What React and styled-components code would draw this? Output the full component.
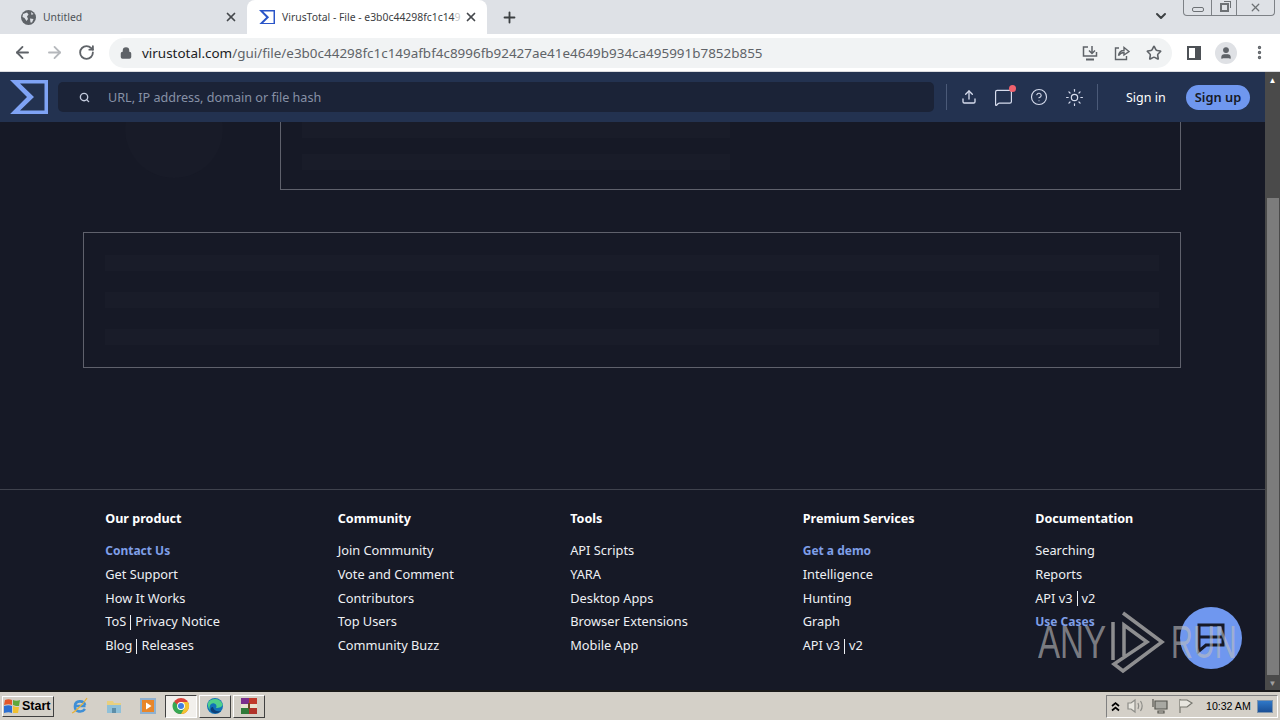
import React from 'react';
import styled, { createGlobalStyle } from 'styled-components';
import {
  ArrowLeft, ArrowRight, RotateCw, Lock, Star, X, Plus, ChevronDown, Search,
  Upload, MessageSquare, CircleHelp, Sun, EllipsisVertical, User,
} from 'lucide-react';

const GlobalStyle = createGlobalStyle`
  html, body { margin: 0; height: 100%; overflow: hidden; }
  body { font-family: "Noto Sans", sans-serif; background: #161926; }
  * { box-sizing: border-box; }
`;

const footerColumns = [
  { title: 'Our product', links: [['Contact Us', true], ['Get Support'], ['How It Works'], ['ToS | Privacy Notice'], ['Blog | Releases']] },
  { title: 'Community', links: [['Join Community'], ['Vote and Comment'], ['Contributors'], ['Top Users'], ['Community Buzz']] },
  { title: 'Tools', links: [['API Scripts'], ['YARA'], ['Desktop Apps'], ['Browser Extensions'], ['Mobile App']] },
  { title: 'Premium Services', links: [['Get a demo', true], ['Intelligence'], ['Hunting'], ['Graph'], ['API v3 | v2']] },
  { title: 'Documentation', links: [['Searching'], ['Reports'], ['API v3 | v2'], ['Use Cases', true]] },
];

const Sigma = ({ size, color }) => (
  <svg width={size} height={size * 0.9} viewBox="0 0 38 34">
    <path fill={color} fillRule="evenodd" d="M0 0H38V34H0L17 17ZM10 3.500L24 17L10 30.500H34.500V3.500Z" />
  </svg>
);

// "ToS | Privacy Notice": the bar sits tight between the words
const LinkLabel = ({ text }) => {
  const [left, right] = text.split(' | ');
  if (!right) return text;
  return <>{left}<Pipe />{right}</>;
};

export default function App() {
  return (
    <Screen>
      <GlobalStyle />
      <TabStrip>
        <Tab>
          <svg width="15" height="15" viewBox="0 0 15 15">
            <circle cx="7.500" cy="7.500" r="7.500" fill="#5f6368" />
            <path fill="#dee1e6" d="M2 4L6 2.500L7.500 4.500L6 6.500L7 9L5.500 11L3.500 8L1.500 7ZM9 8.500L12.500 9L11 12.500L9.500 12.500ZM10 2L12.500 4L10.500 5Z" />
          </svg>
          <TabTitle>Untitled</TabTitle>
          <X size={14} strokeWidth={3} color="#45484c" />
        </Tab>
        <Tab $active>
          <Sigma size={16} color="#2a55c8" />
          <TabTitle $active>VirusTotal - File - e3b0c44298fc1c14<Faded>9</Faded></TabTitle>
          <X size={14} strokeWidth={3} color="#45484c" />
        </Tab>
        <NewTab><Plus size={17} strokeWidth={2.6} color="#3c4043" /></NewTab>
        <TabSpacer />
        <ChevronDown size={16} strokeWidth={3} color="#3c4043" />
        <WindowButtons>
          <WinButton $w={28}><MinGlyph /></WinButton>
          <WinButton $w={25}><RestoreGlyph /></WinButton>
          <WinButton $w={37} $last><X size={13} color="#6d7175" strokeWidth={2.4} /></WinButton>
        </WindowButtons>
      </TabStrip>

      <Toolbar>
        <NavIcon><ArrowLeft size={19} strokeWidth={2.3} color="#5f6368" /></NavIcon>
        <NavIcon><ArrowRight size={19} strokeWidth={2.3} color="#b5b8bc" /></NavIcon>
        <NavIcon><RotateCw size={17} strokeWidth={2.6} color="#5f6368" /></NavIcon>
        <Omnibox>
          <Lock size={12} strokeWidth={3} color="#5f6368" fill="#5f6368" />
          <Url><b>virustotal.com</b>/gui/file/e3b0c44298fc1c149afbf4c8996fb92427ae41e4649b934ca495991b7852b855</Url>
          <OmniActions>
            <svg width="16" height="16" viewBox="0 0 16 16" fill="none" stroke="#5f6368" strokeWidth="1.500">
              <path d="M6 2H1.500V11H14.500V7" />
              <path d="M10 1V8M7 5.500L10 8.500L13 5.500" />
              <path d="M4 14.500H12" strokeWidth="2" />
            </svg>
            <svg width="16" height="16" viewBox="0 0 16 16" fill="none" stroke="#5f6368" strokeWidth="1.400">
              <path d="M5 3H1.500V14.500H12.500V11" />
              <path d="M4.500 10.500C5 7 7.500 5.500 10 5.500V2.500L15 6.500L10 10V7.500C8 7.500 6 8.500 4.500 10.500Z" />
            </svg>
            <Star size={16} strokeWidth={2.4} color="#5f6368" />
          </OmniActions>
        </Omnibox>
        <SidePanelIcon />
        <Avatar><User size={14} color="#5f6368" fill="#5f6368" /></Avatar>
        <EllipsisVertical size={17} strokeWidth={2.8} color="#5f6368" />
      </Toolbar>

      <Viewport>
        <Page>
          <Header>
            <Sigma size={38} color="#7fa3f5" />
            <SearchBox>
              <Search size={11} strokeWidth={3} color="#c3cbdd" />
              <span>URL, IP address, domain or file hash</span>
            </SearchBox>
            <Divider />
            <HeaderIcons>
              <Upload size={16} color="#d6dced" />
              <Badge>
                <MessageSquare size={19} strokeWidth={1.5} color="#d6dced" />
                <Dot />
              </Badge>
              <CircleHelp size={18} strokeWidth={1.5} color="#d6dced" />
              <Sun size={19} strokeWidth={1.5} color="#d6dced" />
            </HeaderIcons>
            <Divider $flush />
            <SignIn>Sign in</SignIn>
            <SignUp>Sign up</SignUp>
          </Header>

          <Content>
            <TopRow>
              <AvatarSkeleton />
              <TopCard>
                <SkeletonLine $w={428} />
                <SkeletonLine $w={428} />
              </TopCard>
            </TopRow>
            <WideCard>
              <SkeletonLine />
              <SkeletonLine />
              <SkeletonLine />
            </WideCard>
            <Footer>
              {footerColumns.map((col) => (
                <FooterColumn key={col.title}>
                  <FooterTitle>{col.title}</FooterTitle>
                  {col.links.map(([label, accent]) => (
                    <FooterLink key={label} $accent={accent}><LinkLabel text={label} /></FooterLink>
                  ))}
                </FooterColumn>
              ))}
            </Footer>
            <Fab>
              <svg width="34" height="34" viewBox="0 0 34 34" fill="none" stroke="#161926" strokeWidth="3">
                <path d="M5 4H29V24H12L5 30Z" />
                <path d="M5 16H29" />
              </svg>
            </Fab>
            <Watermark>
              <WatermarkText $scale={0.72}>ANY</WatermarkText>
              <svg width="58" height="64" viewBox="0 0 58 64" fill="none" stroke="#8e8e90" strokeWidth="3.500">
                <path d="M6 12V50" />
                <path d="M16 3L55 32L16 61L7 54L40 32L17 15V46" />
              </svg>
              <WatermarkText $scale={0.66}>RUN</WatermarkText>
            </Watermark>
          </Content>
        </Page>
        <Scrollbar>
          <ScrollArrow>▲</ScrollArrow>
          <ScrollTrack><ScrollThumb /></ScrollTrack>
          <ScrollArrow $down>▼</ScrollArrow>
        </Scrollbar>
      </Viewport>

      <Taskbar>
        <StartButton>
          <svg width="17" height="16" viewBox="0 0 17 16">
            <path fill="#e2572b" d="M1 2C3 1 6 1 8 2V7C6 6 3 6 0 7Z" />
            <path fill="#5ea83a" d="M9 2C11 3 14 3 16 2L15 8C13 8 11 8 9 7Z" />
            <path fill="#2c6fd1" d="M0 8C3 7 6 7 8 8V15C6 14 3 14 0 15Z" />
            <path fill="#f0c030" d="M9 8C11 9 13 9 15 9L14 15C12 15 11 15 9 15Z" />
          </svg>
          Start
        </StartButton>
        <QuickIcons>
          <QuickIcon>
            <svg width="18" height="18" viewBox="0 0 18 18" fill="none">
              <path d="M14.500 9H4C4 3 13 3 14 8M4 10C4 15 11 16 14 12" stroke="#3f8fd6" strokeWidth="2.600" />
              <path d="M1 16C4 15 13 6 16 1" stroke="#e8b23a" strokeWidth="1.200" />
            </svg>
          </QuickIcon>
          <QuickIcon>
            <svg width="18" height="18" viewBox="0 0 18 18">
              <path fill="#e8cf7e" d="M2 4H8L9 6H16V9H2Z" />
              <path fill="#8fc0d8" d="M2 8H16V16H2Z" />
              <path fill="#5d8ea8" d="M7 11H11V16H7Z" />
            </svg>
          </QuickIcon>
          <QuickIcon>
            <svg width="18" height="18" viewBox="0 0 18 18">
              <rect x="1" y="1" width="16" height="16" fill="#8fb0cf" />
              <rect x="3" y="3" width="12" height="12" fill="#e8862a" />
              <path fill="#fff" d="M7 5.500L12.500 9L7 12.500Z" />
            </svg>
          </QuickIcon>
        </QuickIcons>
        <TaskButton $active>
          <svg width="18" height="18" viewBox="0 0 18 18">
            <circle cx="9" cy="9" r="8" fill="#d9433a" />
            <path fill="#f4c430" d="M9 17A8 8 0 0 0 16 5H9Z" />
            <path fill="#37a853" d="M2 4.500A8 8 0 0 0 9 17L12.500 11H9Z" />
            <circle cx="9" cy="9" r="3.900" fill="#fff" />
            <circle cx="9" cy="9" r="3" fill="#3f7fe0" />
          </svg>
        </TaskButton>
        <TaskButton>
          <svg width="18" height="18" viewBox="0 0 18 18">
            <circle cx="9" cy="9" r="8" fill="#1273b8" />
            <path fill="#4fd08a" d="M2 6C4 1 14 0 16.500 7C17 10 13 11 10 11C12 8 8 5 5 7C4 8 3 10 4 13C2 11 1.500 8 2 6Z" />
            <path fill="#0d3f78" d="M5 14C7 17 12 17 15 14C11 15 8 14 7 10C5 10 4 12 5 14Z" />
          </svg>
        </TaskButton>
        <TaskButton>
          <svg width="18" height="18" viewBox="0 0 18 18">
            <rect x="1" y="1" width="8" height="6" fill="#7a2f8c" />
            <rect x="9" y="1" width="8" height="6" fill="#c0392b" />
            <rect x="1" y="7" width="16" height="4" fill="#e8e2d0" />
            <rect x="1" y="11" width="8" height="6" fill="#2f7a3a" />
            <rect x="9" y="11" width="8" height="6" fill="#b0332a" />
            <rect x="8" y="6" width="2" height="6" fill="#6b4a22" />
          </svg>
        </TaskButton>
        <TaskSpacer />
        <Tray>
          <svg width="11" height="11" viewBox="0 0 11 11" fill="none" stroke="#000" strokeWidth="1.700">
            <path d="M2 5L5.500 2L9 5M2 9.500L5.500 6.500L9 9.500" />
          </svg>
          <svg width="18" height="16" viewBox="0 0 18 16" fill="none" stroke="#8d8d88" strokeWidth="1.200">
            <path d="M1 5H4L8 2V14L4 11H1Z" fill="#e8e6df" />
            <path d="M11 5C12 7 12 9 11 11M13.500 3C15.500 6 15.500 10 13.500 13" />
          </svg>
          <svg width="18" height="16" viewBox="0 0 18 16" fill="none" stroke="#55554f" strokeWidth="1.200">
            <path d="M4 3H16V11H4Z" fill="#a8a8a2" />
            <path d="M2 1V9M7 13H13V15H7Z" />
          </svg>
          <TrayFlag>
            <svg width="16" height="16" viewBox="0 0 16 16" fill="none" stroke="#77776f" strokeWidth="1.200">
              <path d="M2 1V15" />
              <path d="M2 2H9L14 5L9 9H2" fill="#e8e6df" />
            </svg>
          </TrayFlag>
          <Clock>10:32 AM</Clock>
          <DesktopPeek />
        </Tray>
      </Taskbar>
    </Screen>
  );
}

const Screen = styled.div`
  width: 1280px;
  height: 720px;
  display: flex;
  flex-direction: column;
  overflow: hidden;
`;

const TabStrip = styled.div`
  height: 34px;
  background: #dee1e6;
  display: flex;
  align-items: flex-end;
  padding-left: 8px;
  flex-shrink: 0;
  position: relative;
  & > svg { margin: 0 111px 10px 0; }
`;

const Tab = styled.div`
  width: ${(p) => (p.$active ? '240px' : '239px')};
  height: 34px;
  padding: 0 9px 0 ${(p) => (p.$active ? '12px' : '13px')};
  display: flex;
  align-items: center;
  gap: 7px;
  background: ${(p) => (p.$active ? '#fff' : 'transparent')};
  border-radius: 8px 8px 0 0;
  svg { flex-shrink: 0; }
`;

const TabTitle = styled.span`
  flex: 1;
  min-width: 0;
  font-size: 10.4px;
  white-space: nowrap;
  color: ${(p) => (p.$active ? '#3c4043' : '#4d5156')};
`;

const Faded = styled.span`
  opacity: 0.3;
`;

const NewTab = styled.div`
  width: 30px;
  height: 34px;
  display: flex;
  align-items: center;
  justify-content: center;
  margin-left: 7px;
`;

const TabSpacer = styled.div`
  flex: 1;
`;

const WindowButtons = styled.div`
  position: absolute;
  top: 0;
  right: 5px;
  height: 16px;
  display: flex;
  border: 1px solid #7d8186;
  border-top: none;
  border-radius: 0 0 4px 4px;
`;

const WinButton = styled.div`
  width: ${(p) => p.$w}px;
  display: flex;
  align-items: center;
  justify-content: center;
  border-right: ${(p) => (p.$last ? 'none' : '1px solid #7d8186')};
`;

const MinGlyph = styled.div`
  width: 12px;
  height: 5px;
  margin-top: 4px;
  border: 1px solid #6d7175;
  border-radius: 2px;
`;

const RestoreGlyph = styled.div`
  width: 9px;
  height: 9px;
  border: 2px solid #6d7175;
  box-shadow: 2px -2px 0 -1px #dee1e6, 3px -3px 0 -1px #6d7175;
`;

const Toolbar = styled.div`
  height: 38px;
  background: #fff;
  border-bottom: 1px solid #dadce0;
  display: flex;
  align-items: center;
  padding: 0 12px 0 6px;
  flex-shrink: 0;
`;

const NavIcon = styled.div`
  width: 32px;
  display: flex;
  justify-content: center;
`;

const Omnibox = styled.div`
  width: 1063px;
  height: 30px;
  margin-left: 7px;
  border-radius: 15px;
  background: #f1f3f4;
  display: flex;
  align-items: center;
  padding: 0 10px 0 11px;
`;

const Url = styled.div`
  flex: 1;
  margin-left: 10px;
  font-size: 13.44px;
  color: #5f6368;
  white-space: nowrap;
  b { font-weight: 400; color: #202124; }
`;

const OmniActions = styled.div`
  display: flex;
  gap: 16px;
  align-items: center;
`;

const SidePanelIcon = styled.div`
  width: 14px;
  height: 14px;
  margin-left: 15px;
  border: 2px solid #4d5156;
  border-right-width: 6px;
`;

const Avatar = styled.div`
  width: 22px;
  height: 22px;
  margin: 0 14px;
  border-radius: 50%;
  background: #dfe1e5;
  display: flex;
  align-items: center;
  justify-content: center;
`;

const Viewport = styled.div`
  flex: 1;
  display: flex;
  min-height: 0;
`;

const Page = styled.div`
  width: 1265px;
  display: flex;
  flex-direction: column;
  background: #161926;
`;

const Header = styled.header`
  height: 50px;
  background: #233250;
  display: flex;
  align-items: center;
  padding: 0 15px 0 10px;
  flex-shrink: 0;
  position: relative;
  z-index: 1;
`;

const SearchBox = styled.div`
  width: 876px;
  height: 30px;
  margin-left: 10px;
  flex-shrink: 0;
  border-radius: 5px;
  background: #1b2337;
  display: flex;
  align-items: center;
  gap: 18px;
  padding-left: 21px;
  color: #8791a6;
  font-size: 12.6px;
`;

const Divider = styled.div`
  width: 1px;
  height: 26px;
  flex-shrink: 0;
  background: #4b5a78;
  margin-left: ${(p) => (p.$flush ? '0' : '12px')};
`;

const HeaderIcons = styled.div`
  width: 150px;
  flex-shrink: 0;
  padding: 0 13px 0 14px;
  display: flex;
  align-items: center;
  justify-content: space-between;
`;

const Badge = styled.div`
  position: relative;
  display: flex;
`;

const Dot = styled.span`
  position: absolute;
  top: -3px;
  right: -3px;
  width: 7px;
  height: 7px;
  border-radius: 50%;
  background: #f0616d;
`;

const SignIn = styled.div`
  margin-left: 28px;
  width: 39px;
  color: #fff;
  font-size: 12.5px;
  white-space: nowrap;
`;

const SignUp = styled.div`
  margin-left: 21px;
  width: 64px;
  height: 25px;
  flex-shrink: 0;
  border-radius: 13px;
  background: #6f97ef;
  color: #161926;
  font-size: 12.8px;
  font-weight: 600;
  white-space: nowrap;
  display: flex;
  align-items: center;
  justify-content: center;
`;

const Content = styled.main`
  flex: 1;
  min-height: 0;
  position: relative;
  overflow: hidden;
`;

const TopRow = styled.div`
  margin: -60px 84px 0 83px;
  height: 128px;
  display: flex;
  align-items: flex-start;
  justify-content: space-between;
`;

const AvatarSkeleton = styled.div`
  width: 98px;
  height: 98px;
  margin: 18px 0 0 42px;
  border-radius: 50%;
  background: #181b28;
`;

const TopCard = styled.div`
  width: 901px;
  height: 128px;
  border: 1px solid #5f616c;
  padding: 59px 0 0 21px;
  display: flex;
  flex-direction: column;
  gap: 16px;
`;

const SkeletonLine = styled.div`
  height: 16px;
  flex-shrink: 0;
  width: ${(p) => (p.$w ? `${p.$w}px` : '100%')};
  background: #191c29;
`;

const WideCard = styled.section`
  margin: 42px 84px 0 83px;
  height: 136px;
  border: 1px solid #5f616c;
  padding: 22px 21px;
  display: flex;
  flex-direction: column;
  gap: 21px;
`;

const Footer = styled.footer`
  margin-top: 121px;
  border-top: 1px solid #3f424d;
  padding: 20px 0 0 105.2px;
  display: grid;
  grid-template-columns: repeat(5, 232.5px);
`;

const FooterColumn = styled.div`
  display: flex;
  flex-direction: column;
`;

const FooterTitle = styled.div`
  font-size: 12.6px;
  font-weight: 700;
  line-height: 18px;
  color: #fff;
  margin-bottom: 11px;
`;

const FooterLink = styled.div`
  font-size: ${(p) => (p.$accent ? '12px' : '12.8px')};
  line-height: 23.8px;
  white-space: nowrap;
  display: flex;
  align-items: center;
  font-weight: ${(p) => (p.$accent ? 700 : 400)};
  color: ${(p) => (p.$accent ? '#7f9fe8' : '#eef0f4')};
`;

const Pipe = styled.span`
  width: 1px;
  height: 15px;
  margin: 0 4px;
  background: #eef0f4;
`;

const Fab = styled.div`
  position: absolute;
  left: 1180px;
  top: 485px;
  width: 62px;
  height: 62px;
  border-radius: 50%;
  background: #6f97ef;
  display: flex;
  align-items: center;
  justify-content: center;
`;

const Watermark = styled.div`
  position: absolute;
  left: 1038px;
  top: 488px;
  display: flex;
  align-items: center;
  gap: 6px;
  pointer-events: none;
`;

const WatermarkText = styled.span`
  font-family: "Liberation Sans", sans-serif;
  font-size: 46px;
  font-weight: 400;
  color: rgba(190, 190, 190, 0.62);
  display: inline-block;
  width: 63px;
  transform: scaleX(${(p) => p.$scale});
  transform-origin: left center;
`;

const Scrollbar = styled.div`
  width: 15px;
  background: #4a4a4a;
  display: flex;
  flex-direction: column;
`;

const ScrollArrow = styled.div`
  height: 16px;
  font-size: 8px;
  line-height: 16px;
  text-align: center;
  color: ${(p) => (p.$down ? '#a0a0a0' : '#fff')};
`;

const ScrollTrack = styled.div`
  flex: 1;
  padding: 110px 1px 0 2px;
  display: flex;
`;

const ScrollThumb = styled.div`
  flex: 1;
  height: 477px;
  background: #7c7c7c;
`;

const Taskbar = styled.div`
  height: 30px;
  background: #d4d0c8;
  border-top: 2px solid #1a1a1a;
  display: flex;
  align-items: center;
  padding: 0 2px;
  flex-shrink: 0;
`;

const StartButton = styled.div`
  width: 52px;
  height: 21px;
  display: flex;
  align-items: center;
  gap: 1px;
  padding-left: 1px;
  background: #d4d0c8;
  border: 1px solid;
  border-color: #fff #404040 #404040 #fff;
  font-family: "Liberation Sans", sans-serif;
  font-size: 12.5px;
  font-weight: 700;
  color: #000;
`;

const QuickIcons = styled.div`
  display: flex;
  margin-left: 9px;
`;

const QuickIcon = styled.div`
  width: 34px;
  height: 21px;
  display: flex;
  align-items: center;
  justify-content: center;
`;

const TaskButton = styled.div`
  width: 32px;
  height: 23px;
  margin-right: 2px;
  display: flex;
  align-items: center;
  justify-content: center;
  background: ${(p) => (p.$active ? '#f2f0ec' : '#d4d0c8')};
  border: 1px solid;
  border-color: ${(p) => (p.$active ? '#404040 #fff #fff #404040' : '#fff #404040 #404040 #fff')};
`;

const TaskSpacer = styled.div`
  flex: 1;
`;

const Tray = styled.div`
  width: 172px;
  height: 23px;
  flex-shrink: 0;
  display: flex;
  align-items: center;
  gap: 6px;
  padding-left: 3px;
  border: 1px solid;
  border-color: #808080 #fff #fff #808080;
`;

const TrayFlag = styled.div`
  display: flex;
  margin-left: 3px;
`;

const Clock = styled.span`
  margin-left: 6px;
  font-family: "Liberation Sans", sans-serif;
  font-size: 10.6px;
  color: #000;
  white-space: nowrap;
  flex-shrink: 0;
`;

const DesktopPeek = styled.div`
  width: 16px;
  height: 13px;
  flex-shrink: 0;
  background: linear-gradient(180deg, #2f78c8, #1a4f96);
  border: 1px solid #7d94ad;
`;
